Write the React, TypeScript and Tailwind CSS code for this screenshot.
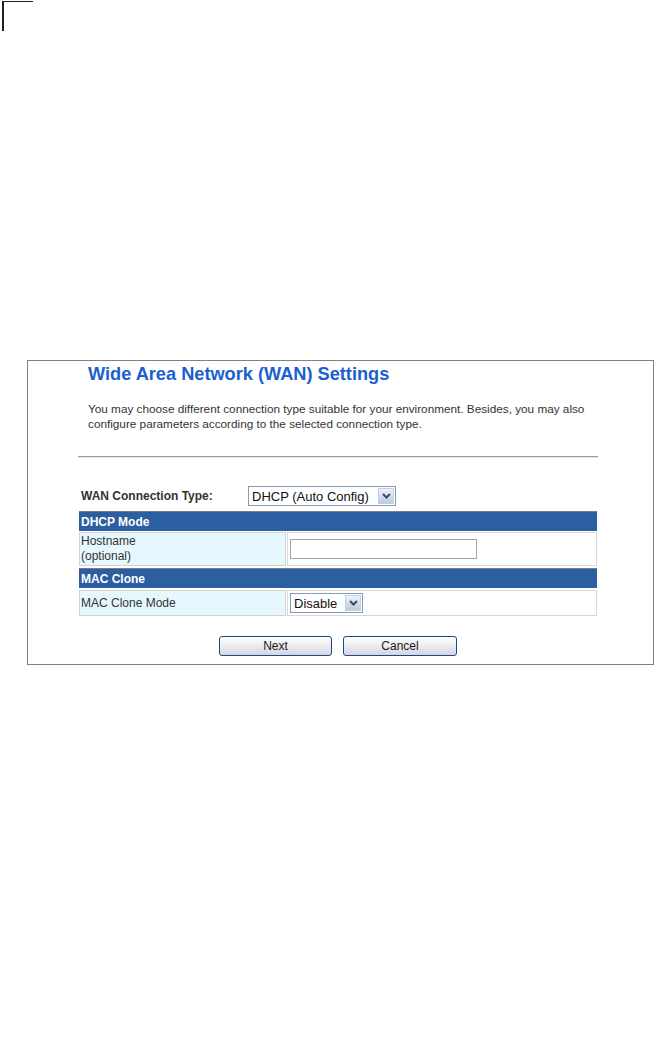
import React from "react";

function Chevron() {
  return (
    <svg width="9" height="6" viewBox="0 0 9 6" className="block">
      <path d="M1 1 L4.5 4.5 L8 1" fill="none" stroke="#3c4a66" strokeWidth="2" />
    </svg>
  );
}

function Select({ value, width }: { value: string; width: string }) {
  return (
    <div className={`${width} h-[20px] border border-[#7f9db9] bg-white flex items-center justify-between pl-[3px] pr-[1px]`}>
      <span className="text-[13px] leading-none text-[#111]">{value}</span>
      <div className="w-[16px] h-[16px] border border-[#c3cfe6] bg-gradient-to-b from-[#eef2fb] to-[#bfcadf] flex items-center justify-center">
        <Chevron />
      </div>
    </div>
  );
}

function Header({ label }: { label: string }) {
  return (
    <div className="h-[20px] border-t border-[#7d7d7d] bg-[#2c5ea2] flex items-center pl-[2px] text-[12px] font-bold text-white leading-none">
      {label}
    </div>
  );
}

function Button({ label, width }: { label: string; width: string }) {
  return (
    <button className={`${width} h-[20px] rounded-[3px] border border-[#1c4a7c] bg-gradient-to-b from-white to-[#d6d6e2] text-[12px] text-[#1a1a1a] leading-none flex items-center justify-center`}>
      {label}
    </button>
  );
}

export default function App() {
  return (
    <div className="w-[657px] h-[1054px] bg-white font-['Liberation_Sans',Arial,sans-serif] pt-[1px]">
      <div className="ml-[2px] w-[31px] h-[30px] border-l-2 border-t border-[#231f20]" />
      <div className="ml-[27px] mt-[329px] w-[627px] border border-[#808080] pt-[2px] pb-[8px] pl-[50px]">
        <div className="w-[520px]">
          <h1 className="pl-[10px] text-[18.2px] leading-[22px] font-bold text-[#1b5fce]">
            Wide Area Network (WAN) Settings
          </h1>
          <p className="pl-[10px] mt-[16px] text-[11.75px] leading-[15px] text-[#333]">
            You may choose different connection type suitable for your environment. Besides, you may also
            <br />
            configure parameters according to the selected connection type.
          </p>
          <div className="mt-[25px] h-[2px] border-t border-b border-t-[#9a9a9a] border-b-[#e6e6e6]" />
          <div className="mt-[28px] flex items-center h-[20px]">
            <div className="w-[170px] pl-[3px] text-[12px] font-bold text-[#333]">WAN Connection Type:</div>
            <Select value="DHCP (Auto Config)" width="w-[148px]" />
          </div>
          <div className="mt-[5px] ml-[1px] w-[518px]">
            <Header label="DHCP Mode" />
            <div className="mt-[1px] h-[34px] flex">
              <div className="w-[207px] border border-[#d2d2d2] bg-[#e6f7fe] pl-[1px] pt-[1px] text-[12px] leading-[15px] text-[#333]">
                Hostname
                <br />
                (optional)
              </div>
              <div className="ml-[1px] flex-1 border border-[#d8d8d8] bg-white flex items-center pl-[2px]">
                <div className="w-[187px] h-[20px] border border-[#a5a5a5] bg-white" />
              </div>
            </div>
            <div className="mt-[2px]">
              <Header label="MAC Clone" />
            </div>
            <div className="mt-[2px] h-[26px] flex">
              <div className="w-[207px] border border-[#d2d2d2] bg-[#e6f7fe] pl-[1px] flex items-center text-[12px] leading-[15px] text-[#333]">
                MAC Clone Mode
              </div>
              <div className="ml-[1px] flex-1 border border-[#d8d8d8] bg-white flex items-center pl-[2px]">
                <Select value="Disable" width="w-[73px]" />
              </div>
            </div>
          </div>
          <div className="mt-[20px] flex justify-center gap-[11px]">
            <Button label="Next" width="w-[113px]" />
            <Button label="Cancel" width="w-[114px]" />
          </div>
        </div>
      </div>
    </div>
  );
}
